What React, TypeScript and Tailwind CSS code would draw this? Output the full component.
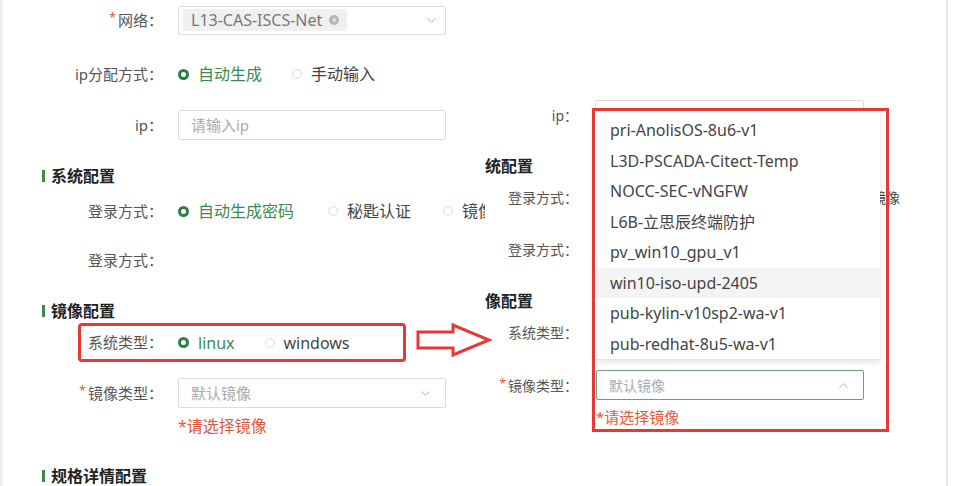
import { ChevronDown, ChevronUp } from "lucide-react";

const items = [
  "pri-AnolisOS-8u6-v1",
  "L3D-PSCADA-Citect-Temp",
  "NOCC-SEC-vNGFW",
  "L6B-立思辰终端防护",
  "pv_win10_gpu_v1",
  "win10-iso-upd-2405",
  "pub-kylin-v10sp2-wa-v1",
  "pub-redhat-8u5-wa-v1",
];

function Radio({ on }: { on?: boolean }) {
  return on ? (
    <span className="inline-block w-[11px] h-[11px] rounded-full border-[3px] border-[#2f7d45] bg-white shrink-0" />
  ) : (
    <span className="inline-block w-[10px] h-[10px] rounded-full border border-[#dcdcdc] bg-white shrink-0" />
  );
}

function Opt({ on, text, className = "" }: { on?: boolean; text: string; className?: string }) {
  return (
    <span className={`flex items-center shrink-0 text-[16px] ${className}`}>
      <Radio on={on} />
      <span className={`ml-[9px] whitespace-nowrap ${on ? "text-[#3a8a50]" : "text-[#444]"}`}>{text}</span>
    </span>
  );
}

function Label({ text, req, w }: { text: string; req?: boolean; w: string }) {
  return (
    <span className={`${w} shrink-0 text-right text-[#555] whitespace-nowrap`}>
      {req && <span className="text-[#e5533d] mr-[2px] text-[12px] align-top">*</span>}
      {text}
    </span>
  );
}

function Header({ text }: { text: string }) {
  return (
    <div className="h-[20px] flex items-center font-bold text-[16px] text-[#222] whitespace-nowrap">
      <span className="w-[3px] h-[12px] bg-[#3a8a4a] mr-[6px]" />
      {text}
    </div>
  );
}

export default function App() {
  return (
    <div className="relative w-[962px] h-[486px] overflow-hidden bg-white flex text-[15px] font-['Noto_Sans','Noto_Sans_CJK_SC',sans-serif]">
      <div className="w-[3px] bg-[#eef0f0] shrink-0" />
      {/* left form */}
      <div className="w-[482px] shrink-0 overflow-hidden pt-[5px]">
        <div className="h-[30px] flex items-center">
          <Label text="网络：" req w="w-[160px]" />
          <div className="ml-[15px] w-[268px] h-[29px] border border-[#dcdcdc] rounded-[2px] flex items-center px-[4px]">
            <span className="h-[22px] bg-[#f0f0f0] flex items-center pl-[8px] pr-[8px] text-[16px] text-[#777] whitespace-nowrap">
              L13-CAS-ISCS-Net
              <span className="ml-[7px] w-[10px] h-[10px] rounded-full bg-[#b5b5b5] text-white text-[8px] leading-[10px] text-center">×</span>
            </span>
            <ChevronDown className="ml-auto mr-[2px] text-[#aaa]" size={15} strokeWidth={1.5} />
          </div>
        </div>
        <div className="h-[30px] mt-[24px] flex items-center">
          <Label text="ip分配方式：" w="w-[160px]" />
          <div className="ml-[15px] flex items-center">
            <Opt on text="自动生成" />
            <Opt text="手动输入" className="ml-[30px]" />
          </div>
        </div>
        <div className="h-[30px] mt-[21px] flex items-center">
          <Label text="ip：" w="w-[160px]" />
          <div className="ml-[15px] w-[268px] h-[30px] border border-[#dcdcdc] rounded-[2px] flex items-center px-[12px] text-[#aaa]">
            请输入ip
          </div>
        </div>
        <div className="mt-[26px] pl-[39px]">
          <Header text="系统配置" />
        </div>
        <div className="h-[30px] mt-[10px] flex items-center">
          <Label text="登录方式：" w="w-[160px]" />
          <div className="ml-[15px] flex items-center">
            <Opt on text="自动生成密码" />
            <Opt text="秘匙认证" className="ml-[34px]" />
            <Opt text="镜像密码" className="ml-[32px]" />
          </div>
        </div>
        <div className="h-[30px] mt-[19px] flex items-center">
          <Label text="登录方式：" w="w-[160px]" />
        </div>
        <div className="mt-[26px] pl-[39px]">
          <Header text="镜像配置" />
        </div>
        <div className="mt-[2px] ml-[75px] w-[328px] h-[39px] border-[3px] border-[#e53935] rounded-[4px] flex items-center">
          <Label text="系统类型：" w="w-[82px]" />
          <div className="ml-[15px] flex items-center">
            <Opt on text="linux" />
            <Opt text="windows" className="ml-[30px]" />
          </div>
        </div>
        <div className="h-[30px] mt-[16px] flex items-center">
          <Label text="镜像类型：" req w="w-[160px]" />
          <div className="ml-[15px] w-[268px] h-[30px] border border-[#dcdcdc] rounded-[2px] flex items-center px-[12px] text-[#aaa]">
            默认镜像
            <ChevronDown className="ml-auto text-[#aaa]" size={15} strokeWidth={1.5} />
          </div>
        </div>
        <div className="h-[20px] mt-[8px] ml-[175px] flex items-center text-[16px] text-[#e0583a] whitespace-nowrap">*请选择镜像</div>
        <div className="mt-[30px] pl-[39px]">
          <Header text="规格详情配置" />
        </div>
      </div>

      {/* right capture */}
      <div className="w-[461px] shrink-0 overflow-hidden pt-[100px] text-[14px]">
        <div className="h-[30px] flex items-center">
          <Label text="ip：" w="w-[93px]" />
          <div className="ml-[17px] w-[269px] h-[30px] border border-[#dcdcdc] rounded-[2px]" />
        </div>
        <div className="mt-[26px] ml-[-25px]">
          <Header text="系统配置" />
        </div>
        <div className="h-[30px] mt-[6px] flex items-center">
          <Label text="登录方式：" w="w-[93px]" />
          <span className="ml-[302px] w-[20px] overflow-hidden whitespace-nowrap text-[#444] flex justify-end">镜像</span>
        </div>
        <div className="h-[30px] mt-[22px] flex items-center">
          <Label text="登录方式：" w="w-[93px]" />
        </div>
        <div className="mt-[27px] ml-[-25px]">
          <Header text="镜像配置" />
        </div>
        <div className="h-[30px] mt-[6px] flex items-center">
          <Label text="系统类型：" w="w-[93px]" />
        </div>
        <div className="h-[30px] mt-[23px] flex items-center">
          <Label text="镜像类型：" req w="w-[93px]" />
          <div className="ml-[18px] w-[268px] h-[30px] border border-[#6a9f78] rounded-[2px] flex items-center px-[12px] text-[#aaa]">
            默认镜像
            <ChevronUp className="ml-auto text-[#aaa]" size={15} strokeWidth={1.5} />
          </div>
        </div>
        <div className="h-[20px] mt-[7px] ml-[111px] flex items-center text-[15px] text-[#e0583a] whitespace-nowrap">*请选择镜像</div>
      </div>

      <div className="w-[2px] bg-[#e8eaec] shrink-0" />
      <div className="flex-1" />

      {/* dropdown menu */}
      <div className="absolute left-[595px] top-[110px] w-[285px] bg-white shadow-[0_2px_6px_rgba(0,0,0,0.12)] border-b border-[#e4e4e4] pt-[5px] text-[16px] text-[#444]">
        {items.map((t, i) => (
          <div key={t} className={`h-[30.5px] flex items-center pl-[15px] whitespace-nowrap ${i === 5 ? "bg-[#f4f4f4]" : ""}`}>
            {t}
          </div>
        ))}
      </div>

      {/* annotations */}
      <div className="absolute left-[592px] top-[108px] w-[297px] h-[324px] border-[3px] border-[#e53935] pointer-events-none" />
      <svg className="absolute left-[414px] top-[322px]" width="80" height="36" viewBox="0 0 80 36">
        <polygon points="4,10 39,10 39,3 75,18 39,33 39,26 4,26" fill="white" stroke="#e53935" strokeWidth="3" strokeLinejoin="miter" />
      </svg>
    </div>
  );
}
